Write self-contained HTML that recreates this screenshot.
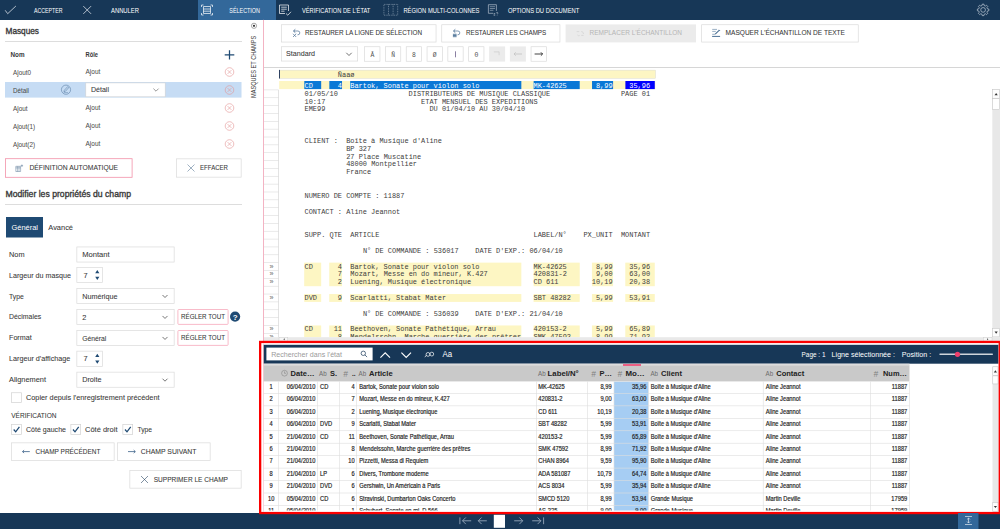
<!DOCTYPE html>
<html lang="fr"><head><meta charset="utf-8"><title>Masques et champs</title>
<style>
html,body{margin:0;padding:0;}
body{width:1000px;height:529px;overflow:hidden;background:#fff;}
svg{display:block}
text{font-family:"Liberation Sans",sans-serif;white-space:pre;}
text.m{font-family:"Liberation Mono",monospace;}
</style></head><body>
<svg width="1000" height="529" viewBox="0 0 1000 529">
<rect x="0" y="0" width="1000" height="20" fill="#173757"/>
<rect x="198" y="0" width="78" height="20" fill="#33689a"/>
<svg x="5" y="4" width="12" height="12" viewBox="0 0 12 12" overflow="visible"><path d="M0.2 6.3 L2.7 9.7 L10.9 2" fill="none" stroke="#e4eaf0" stroke-width="0.75"/></svg>
<text x="34" y="12.61" font-size="6.6" fill="#fff" textLength="28.5" lengthAdjust="spacingAndGlyphs">ACCEPTER</text>
<svg x="83" y="5.8" width="8.4" height="8.4" viewBox="0 0 8.4 8.4" overflow="visible"><path d="M0.3 0.3 L8.1 8.1 M8.1 0.3 L0.3 8.1" fill="none" stroke="#e4eaf0" stroke-width="0.75"/></svg>
<text x="111" y="12.61" font-size="6.6" fill="#fff" textLength="28" lengthAdjust="spacingAndGlyphs">ANNULER</text>
<svg x="201" y="4" width="12" height="12" viewBox="0 0 12 12" overflow="visible"><g fill="none" stroke="#fff" stroke-width="0.7"><path d="M0.5 3 V1 H2.5 M9.5 1 H11.5 V3 M11.5 9 V11 H9.5 M2.5 11 H0.5 V9"/><path d="M2.5 2.5 H9.5 V9.5 H2.5 Z M2.5 5 H9.5 M2.5 7.2 H9.5"/></g></svg>
<text x="229.3" y="12.61" font-size="6.6" fill="#fff" textLength="30.7" lengthAdjust="spacingAndGlyphs">SÉLECTION</text>
<svg x="279" y="4" width="13" height="12" viewBox="0 0 13 12" overflow="visible"><g fill="none" stroke="#fff" stroke-width="0.7"><path d="M9.5 7 V1 H0.5 V9.5 H6"/><path d="M2.2 3.2 H7.8 M2.2 5.2 H7.8 M2.2 7.2 H5.5"/><path d="M7 9.5 L8.8 11.2 L12 7.8"/></g></svg>
<text x="302" y="12.61" font-size="6.6" fill="#fff" textLength="68.3" lengthAdjust="spacingAndGlyphs">VÉRIFICATION DE L&#x27;ÉTAT</text>
<svg x="383.5" y="4" width="14.6" height="11.6" viewBox="0 0 14.6 11.6" overflow="visible"><g fill="none" stroke="#a3b3c5" stroke-width="0.6" stroke-dasharray="0.9 0.8"><path d="M0.4 0.4 H14.2 V11.2 H0.4 Z"/><path d="M5 0.4 V11.2 M9.6 0.4 V11.2"/></g></svg>
<text x="403.4" y="12.61" font-size="6.6" fill="#fff" textLength="76" lengthAdjust="spacingAndGlyphs">RÉGION MULTI-COLONNES</text>
<svg x="488" y="4.3" width="11" height="11.4" viewBox="0 0 11 11.4" overflow="visible"><g fill="none" stroke="#c9d3de" stroke-width="0.6"><path d="M8.4 6.6 V0.4 H0.4 V9 H5"/><path d="M1.8 2.4 H7 M1.8 4.2 H7 M1.8 6 H5.4" stroke-width="0.5"/><path d="M5.6 9.4 H7.2 M5.6 10.8 H7.2" stroke-width="0.7"/><path d="M8.2 8.6 Q9.4 7.6 10 8.6 Q10.1 9.4 9.2 9.9 M9.2 10.8 V11.2" stroke-width="0.55"/></g></svg>
<text x="507.9" y="12.61" font-size="6.6" fill="#fff" textLength="71.4" lengthAdjust="spacingAndGlyphs">OPTIONS DU DOCUMENT</text>
<svg x="977.2" y="3.9" width="11.8" height="12" viewBox="0 0 12.4 12.6" overflow="visible"><g fill="none" stroke="#d5dde6" stroke-width="0.65" stroke-linejoin="round"><circle cx="6.2" cy="6.3" r="2.5"/><path d="M5.07 1.74 L5.29 0.27 L7.11 0.27 L7.33 1.74 L8.62 2.27 L9.82 1.39 L11.11 2.68 L10.23 3.88 L10.76 5.17 L12.23 5.39 L12.23 7.21 L10.76 7.43 L10.23 8.72 L11.11 9.92 L9.82 11.21 L8.62 10.33 L7.33 10.86 L7.11 12.33 L5.29 12.33 L5.07 10.86 L3.78 10.33 L2.58 11.21 L1.29 9.92 L2.17 8.72 L1.64 7.43 L0.17 7.21 L0.17 5.39 L1.64 5.17 L2.17 3.88 L1.29 2.68 L2.58 1.39 L3.78 2.27 Z"/></g></svg>
<text x="5.5" y="34.17" font-size="8.5" fill="#383838" textLength="33.5" lengthAdjust="spacingAndGlyphs" stroke="#383838" stroke-width="0.33">Masques</text>
<rect x="5" y="41" width="237" height="0.7" fill="#cfcfcf"/>
<text x="10.5" y="57.2" font-size="6.3" fill="#383838" font-weight="700">Nom</text>
<text x="85.5" y="57.2" font-size="6.3" fill="#383838" textLength="12.5" lengthAdjust="spacingAndGlyphs" font-weight="700">Rôle</text>
<svg x="224.7" y="50.2" width="9.6" height="9.4" viewBox="0 0 9.6 9.4" overflow="visible"><path d="M4.8 0 V9.4 M0 4.7 H9.6" stroke="#1f4a73" stroke-width="1.25" fill="none"/></svg>
<rect x="5" y="82" width="236.5" height="15.6" fill="#c6dcf4"/>
<rect x="85.8" y="82.9" width="79.4" height="13.9" stroke="#d2d2d2" stroke-width="0.6" fill="#fff"/>
<text x="13" y="74.7" font-size="6.3" fill="#4a4a4a" textLength="18" lengthAdjust="spacingAndGlyphs" stroke="#4a4a4a" stroke-width="0.03">Ajout0</text>
<text x="85.5" y="73.8" font-size="6.3" fill="#4a4a4a" textLength="14.8" lengthAdjust="spacingAndGlyphs" stroke="#4a4a4a" stroke-width="0.03">Ajout</text>
<svg x="224.7" y="67.2" width="9.6" height="9.6" viewBox="0 0 9.6 9.6" overflow="visible"><g fill="none" stroke="#e39393" stroke-width="0.6"><circle cx="4.8" cy="4.8" r="4.3"/><path d="M2.9 2.9 L6.7 6.7 M6.7 2.9 L2.9 6.7"/></g></svg>
<text x="13" y="92.7" font-size="6.3" fill="#4a4a4a" textLength="16" lengthAdjust="spacingAndGlyphs" stroke="#4a4a4a" stroke-width="0.03">Détail</text>
<text x="91" y="92.39" font-size="7.4" fill="#383838" textLength="18" lengthAdjust="spacingAndGlyphs" stroke="#383838" stroke-width="0.07">Détail</text>
<svg x="153" y="88" width="6" height="4" viewBox="0 0 6 4" overflow="visible"><path d="M0.4 0.6 L3 3.2 L5.6 0.6" fill="none" stroke="#555" stroke-width="0.6"/></svg>
<svg x="61" y="84.7" width="10" height="10" viewBox="0 0 10 10" overflow="visible"><g fill="none" stroke="#5b7fa6" stroke-width="0.6"><circle cx="5" cy="5" r="4.6"/><path d="M2.9 7 L3.3 5.6 L6.6 2 L7.7 3 L4.4 6.6 Z"/><path d="M2.8 7.9 H7" stroke-width="0.5"/></g></svg>
<svg x="224.7" y="85.2" width="9.6" height="9.6" viewBox="0 0 9.6 9.6" overflow="visible"><g fill="none" stroke="#e39393" stroke-width="0.6"><circle cx="4.8" cy="4.8" r="4.3"/><path d="M2.9 2.9 L6.7 6.7 M6.7 2.9 L2.9 6.7"/></g></svg>
<text x="13" y="110.7" font-size="6.3" fill="#4a4a4a" textLength="14.6" lengthAdjust="spacingAndGlyphs" stroke="#4a4a4a" stroke-width="0.03">Ajout</text>
<text x="85.5" y="109.8" font-size="6.3" fill="#4a4a4a" textLength="14.8" lengthAdjust="spacingAndGlyphs" stroke="#4a4a4a" stroke-width="0.03">Ajout</text>
<svg x="224.7" y="103.2" width="9.6" height="9.6" viewBox="0 0 9.6 9.6" overflow="visible"><g fill="none" stroke="#e39393" stroke-width="0.6"><circle cx="4.8" cy="4.8" r="4.3"/><path d="M2.9 2.9 L6.7 6.7 M6.7 2.9 L2.9 6.7"/></g></svg>
<text x="13" y="128.71" font-size="6.3" fill="#4a4a4a" stroke="#4a4a4a" stroke-width="0.03">Ajout(1)</text>
<text x="85.5" y="127.8" font-size="6.3" fill="#4a4a4a" textLength="14.8" lengthAdjust="spacingAndGlyphs" stroke="#4a4a4a" stroke-width="0.03">Ajout</text>
<svg x="224.7" y="121.2" width="9.6" height="9.6" viewBox="0 0 9.6 9.6" overflow="visible"><g fill="none" stroke="#e39393" stroke-width="0.6"><circle cx="4.8" cy="4.8" r="4.3"/><path d="M2.9 2.9 L6.7 6.7 M6.7 2.9 L2.9 6.7"/></g></svg>
<text x="13" y="146.71" font-size="6.3" fill="#4a4a4a" stroke="#4a4a4a" stroke-width="0.03">Ajout(2)</text>
<text x="85.5" y="145.81" font-size="6.3" fill="#4a4a4a" textLength="14.8" lengthAdjust="spacingAndGlyphs" stroke="#4a4a4a" stroke-width="0.03">Ajout</text>
<svg x="224.7" y="139.2" width="9.6" height="9.6" viewBox="0 0 9.6 9.6" overflow="visible"><g fill="none" stroke="#e39393" stroke-width="0.6"><circle cx="4.8" cy="4.8" r="4.3"/><path d="M2.9 2.9 L6.7 6.7 M6.7 2.9 L2.9 6.7"/></g></svg>
<rect x="5.4" y="158.7" width="126.7" height="18.6" stroke="#f291a8" stroke-width="0.8" fill="#fff"/>
<svg x="15" y="163.5" width="9" height="9" viewBox="0 0 9 9" overflow="visible"><g fill="none" stroke="#4f6f90" stroke-width="0.45"><path d="M0.8 2.8 H5.6 V8 H0.8 Z M0.8 4.4 H5.6 M2.4 2.8 V8 M4 2.8 V8"/><path d="M6.9 1 V3.4 M5.7 2.2 H8.1" stroke-width="0.5"/></g></svg>
<text x="29.5" y="170.19" font-size="7.4" fill="#383838" textLength="88.5" lengthAdjust="spacingAndGlyphs" stroke="#383838" stroke-width="0.07">DÉFINITION AUTOMATIQUE</text>
<rect x="176.35" y="158.85" width="64.8" height="18.3" stroke="#dadada" stroke-width="0.7" fill="#fff"/>
<svg x="187" y="164" width="8" height="8" viewBox="0 0 8 8" overflow="visible"><path d="M0.5 0.5 L7.5 7.5 M7.5 0.5 L0.5 7.5" fill="none" stroke="#4f6f90" stroke-width="0.55"/></svg>
<text x="200" y="170.19" font-size="7.4" fill="#383838" textLength="28" lengthAdjust="spacingAndGlyphs" stroke="#383838" stroke-width="0.07">EFFACER</text>
<text x="5.5" y="197.47" font-size="8.5" fill="#383838" textLength="125.5" lengthAdjust="spacingAndGlyphs" stroke="#383838" stroke-width="0.33">Modifier les propriétés du champ</text>
<rect x="5" y="204.3" width="237" height="0.7" fill="#cfcfcf"/>
<rect x="6" y="217" width="37" height="20.5" fill="#1f4a73"/>
<text x="11.5" y="230.03" font-size="8.1" fill="#fff" textLength="26.5" lengthAdjust="spacingAndGlyphs">Général</text>
<text x="48.3" y="230.03" font-size="8.1" fill="#383838" textLength="24.7" lengthAdjust="spacingAndGlyphs" stroke="#383838" stroke-width="0.07">Avancé</text>
<text x="9" y="257.09" font-size="7.4" fill="#383838" textLength="15.5" lengthAdjust="spacingAndGlyphs" stroke="#383838" stroke-width="0.07">Nom</text>
<rect x="76.85" y="246.95" width="97.3" height="15.1" stroke="#dadada" stroke-width="0.7" fill="#fff"/>
<text x="82.2" y="257.29" font-size="7.4" fill="#383838" textLength="27.4" lengthAdjust="spacingAndGlyphs" stroke="#383838" stroke-width="0.07">Montant</text>
<text x="9" y="277.79" font-size="7.4" fill="#383838" textLength="62" lengthAdjust="spacingAndGlyphs" stroke="#383838" stroke-width="0.07">Largeur du masque</text>
<rect x="76.85" y="267.35" width="25.6" height="15.3" stroke="#dadada" stroke-width="0.7" fill="#fff"/>
<text x="83.6" y="277.59" font-size="7.4" fill="#383838" stroke="#383838" stroke-width="0.07">7</text>
<svg x="95.1" y="269.8" width="4.4" height="10.4" viewBox="0 0 4.4 10.4" overflow="visible"><path d="M2.2 0.2 L4.3 3.4 H0.1 Z M2.2 10.2 L4.3 7 H0.1 Z" fill="#1f4a73"/></svg>
<text x="9" y="298.59" font-size="7.4" fill="#383838" textLength="14.7" lengthAdjust="spacingAndGlyphs" stroke="#383838" stroke-width="0.07">Type</text>
<rect x="76.85" y="288.55" width="97.3" height="14.9" stroke="#dadada" stroke-width="0.7" fill="#fff"/>
<text x="82.2" y="298.79" font-size="7.4" fill="#383838" textLength="35.3" lengthAdjust="spacingAndGlyphs" stroke="#383838" stroke-width="0.07">Numérique</text>
<svg x="162.2" y="294.6" width="5.6" height="3.6" viewBox="0 0 5.6 3.6" overflow="visible"><path d="M0.3 0.4 L2.8 2.9 L5.3 0.4" fill="none" stroke="#3c3c3c" stroke-width="0.7"/></svg>
<text x="9" y="319.19" font-size="7.4" fill="#383838" textLength="32.2" lengthAdjust="spacingAndGlyphs" stroke="#383838" stroke-width="0.07">Décimales</text>
<rect x="76.85" y="309.45" width="97.3" height="15" stroke="#dadada" stroke-width="0.7" fill="#fff"/>
<text x="82.2" y="319.74" font-size="7.4" fill="#383838" stroke="#383838" stroke-width="0.07">2</text>
<svg x="162.2" y="315.55" width="5.6" height="3.6" viewBox="0 0 5.6 3.6" overflow="visible"><path d="M0.3 0.4 L2.8 2.9 L5.3 0.4" fill="none" stroke="#3c3c3c" stroke-width="0.7"/></svg>
<text x="9" y="340.09" font-size="7.4" fill="#383838" textLength="22.7" lengthAdjust="spacingAndGlyphs" stroke="#383838" stroke-width="0.07">Format</text>
<rect x="76.85" y="330.45" width="97.3" height="15" stroke="#dadada" stroke-width="0.7" fill="#fff"/>
<text x="82.2" y="340.74" font-size="7.4" fill="#383838" textLength="24.2" lengthAdjust="spacingAndGlyphs" stroke="#383838" stroke-width="0.07">Général</text>
<svg x="162.2" y="336.55" width="5.6" height="3.6" viewBox="0 0 5.6 3.6" overflow="visible"><path d="M0.3 0.4 L2.8 2.9 L5.3 0.4" fill="none" stroke="#3c3c3c" stroke-width="0.7"/></svg>
<text x="9" y="360.79" font-size="7.4" fill="#383838" textLength="61.3" lengthAdjust="spacingAndGlyphs" stroke="#383838" stroke-width="0.07">Largeur d&#x27;affichage</text>
<rect x="76.85" y="351.15" width="25.6" height="15.3" stroke="#dadada" stroke-width="0.7" fill="#fff"/>
<text x="83.6" y="361.39" font-size="7.4" fill="#383838" stroke="#383838" stroke-width="0.07">7</text>
<svg x="95.1" y="353.6" width="4.4" height="10.4" viewBox="0 0 4.4 10.4" overflow="visible"><path d="M2.2 0.2 L4.3 3.4 H0.1 Z M2.2 10.2 L4.3 7 H0.1 Z" fill="#1f4a73"/></svg>
<text x="9" y="381.59" font-size="7.4" fill="#383838" stroke="#383838" stroke-width="0.07">Alignement</text>
<rect x="76.85" y="372.15" width="97.3" height="15.1" stroke="#dadada" stroke-width="0.7" fill="#fff"/>
<text x="82.2" y="382.49" font-size="7.4" fill="#383838" textLength="19.3" lengthAdjust="spacingAndGlyphs" stroke="#383838" stroke-width="0.07">Droite</text>
<svg x="162.2" y="378.3" width="5.6" height="3.6" viewBox="0 0 5.6 3.6" overflow="visible"><path d="M0.3 0.4 L2.8 2.9 L5.3 0.4" fill="none" stroke="#3c3c3c" stroke-width="0.7"/></svg>
<rect x="177.9" y="309.5" width="50.2" height="14.9" stroke="#f6aabb" stroke-width="0.8" fill="#fff" rx="0.9"/>
<text x="181" y="318.99" font-size="7.4" fill="#383838" textLength="44" lengthAdjust="spacingAndGlyphs" stroke="#383838" stroke-width="0.07">RÉGLER TOUT</text>
<rect x="177.9" y="330.5" width="50.2" height="14.9" stroke="#f6aabb" stroke-width="0.8" fill="#fff" rx="0.9"/>
<text x="181" y="339.99" font-size="7.4" fill="#383838" textLength="44" lengthAdjust="spacingAndGlyphs" stroke="#383838" stroke-width="0.07">RÉGLER TOUT</text>
<svg x="230" y="311.5" width="10.2" height="10.2" viewBox="0 0 10.2 10.2" overflow="visible"><circle cx="5.1" cy="5.1" r="5.1" fill="#1f4a73"/></svg>
<text x="235.15" y="319.7" font-size="8" fill="#fff" font-weight="700" text-anchor="middle">?</text>
<rect x="11.55" y="392.75" width="9.8" height="9.8" stroke="#d2d2d2" stroke-width="0.7" fill="#fff"/>
<text x="26" y="400.19" font-size="7.4" fill="#383838" textLength="133.5" lengthAdjust="spacingAndGlyphs" stroke="#383838" stroke-width="0.07">Copier depuis l&#x27;enregistrement précédent</text>
<text x="11.2" y="418.29" font-size="7.4" fill="#383838" textLength="45.3" lengthAdjust="spacingAndGlyphs" stroke="#383838" stroke-width="0.07">VÉRIFICATION</text>
<rect x="11.55" y="424.55" width="9.8" height="9.8" stroke="#d2d2d2" stroke-width="0.7" fill="#fff"/>
<svg x="13.2" y="425.9" width="7" height="7" viewBox="0 0 7 7" overflow="visible"><path d="M0.5 3.6 L2.5 5.9 L6.2 0.9" fill="none" stroke="#1f4a73" stroke-width="1.25"/></svg>
<text x="26" y="431.99" font-size="7.4" fill="#383838" textLength="40" lengthAdjust="spacingAndGlyphs" stroke="#383838" stroke-width="0.07">Côté gauche</text>
<rect x="70.85" y="424.55" width="9.8" height="9.8" stroke="#d2d2d2" stroke-width="0.7" fill="#fff"/>
<svg x="72.5" y="425.9" width="7" height="7" viewBox="0 0 7 7" overflow="visible"><path d="M0.5 3.6 L2.5 5.9 L6.2 0.9" fill="none" stroke="#1f4a73" stroke-width="1.25"/></svg>
<text x="85" y="431.99" font-size="7.4" fill="#383838" textLength="32.5" lengthAdjust="spacingAndGlyphs" stroke="#383838" stroke-width="0.07">Côté droit</text>
<rect x="122.85" y="424.55" width="9.8" height="9.8" stroke="#d2d2d2" stroke-width="0.7" fill="#fff"/>
<svg x="124.5" y="425.9" width="7" height="7" viewBox="0 0 7 7" overflow="visible"><path d="M0.5 3.6 L2.5 5.9 L6.2 0.9" fill="none" stroke="#1f4a73" stroke-width="1.25"/></svg>
<text x="137.5" y="431.99" font-size="7.4" fill="#383838" textLength="14.5" lengthAdjust="spacingAndGlyphs" stroke="#383838" stroke-width="0.07">Type</text>
<rect x="11.55" y="442.85" width="102.6" height="17.6" stroke="#dadada" stroke-width="0.7" fill="#fff"/>
<svg x="22" y="449.1" width="8" height="5" viewBox="0 0 8 5" overflow="visible"><path d="M7.8 2.5 H0.6 M2.1 1 L0.5 2.5 L2.1 4" fill="none" stroke="#2d5580" stroke-width="0.75"/></svg>
<text x="35.5" y="454.39" font-size="7.4" fill="#383838" textLength="65" lengthAdjust="spacingAndGlyphs" stroke="#383838" stroke-width="0.07">CHAMP PRÉCÉDENT</text>
<rect x="117.35" y="442.85" width="92.8" height="17.6" stroke="#dadada" stroke-width="0.7" fill="#fff"/>
<svg x="127.8" y="449.1" width="8" height="5" viewBox="0 0 8 5" overflow="visible"><path d="M0.2 2.5 H7.4 M5.9 1 L7.5 2.5 L5.9 4" fill="none" stroke="#2d5580" stroke-width="0.75"/></svg>
<text x="140.8" y="454.39" font-size="7.4" fill="#383838" textLength="55.7" lengthAdjust="spacingAndGlyphs" stroke="#383838" stroke-width="0.07">CHAMP SUIVANT</text>
<rect x="129.85" y="470.35" width="111.3" height="17.8" stroke="#dadada" stroke-width="0.7" fill="#fff"/>
<svg x="140.5" y="475.5" width="8" height="8" viewBox="0 0 8 8" overflow="visible"><path d="M0.5 0.5 L7.5 7.5 M7.5 0.5 L0.5 7.5" fill="none" stroke="#173757" stroke-width="0.55"/></svg>
<text x="153.7" y="481.99" font-size="7.4" fill="#383838" textLength="74.3" lengthAdjust="spacingAndGlyphs" stroke="#383838" stroke-width="0.07">SUPPRIMER LE CHAMP</text>
<svg x="251" y="22.8" width="6" height="6" viewBox="0 0 6 6" overflow="visible"><circle cx="3" cy="3" r="2.6" fill="none" stroke="#555" stroke-width="0.5"/><circle cx="3" cy="3" r="1.1" fill="#333"/></svg>
<text x="-98" y="256.2" font-size="6.6" fill="#3a3a3a" textLength="62.2" lengthAdjust="spacingAndGlyphs" transform="rotate(-90)">MASQUES ET CHAMPS</text>
<rect x="263" y="19.8" width="0.8" height="492.7" fill="#f0a0b4"/>
<rect x="281.35" y="24.75" width="154.7" height="17.3" stroke="#dadada" stroke-width="0.7" fill="#fff"/>
<text x="305" y="35.29" font-size="7.4" fill="#383838" textLength="117" lengthAdjust="spacingAndGlyphs" stroke="#383838" stroke-width="0.07">RESTAURER LA LIGNE DE SÉLECTION</text>
<svg x="292.6" y="28.9" width="8" height="8.5" viewBox="0 0 8 8.5" overflow="visible"><g fill="none" stroke="#4a6f94" stroke-width="0.7"><path d="M1 2.1 H5.3 A1.9 1.9 0 0 1 5.3 5.9 H4.9"/><path d="M2.7 0.4 L0.9 2.1 L2.7 3.8" stroke-width="0.9"/><path d="M0.4 4.9 L3.6 8.1 M3.6 4.9 L0.4 8.1"/></g></svg>
<rect x="441.75" y="24.75" width="118.2" height="17.3" stroke="#dadada" stroke-width="0.7" fill="#fff"/>
<text x="466" y="35.29" font-size="7.4" fill="#383838" textLength="80.2" lengthAdjust="spacingAndGlyphs" stroke="#383838" stroke-width="0.07">RESTAURER LES CHAMPS</text>
<svg x="452.6" y="28.9" width="8" height="8.5" viewBox="0 0 8 8.5" overflow="visible"><g fill="none" stroke="#4a6f94" stroke-width="0.7"><path d="M1 2.1 H5.3 A1.9 1.9 0 0 1 5.3 5.9 H4.9"/><path d="M2.7 0.4 L0.9 2.1 L2.7 3.8" stroke-width="0.9"/><path d="M0.3 5.4 H4 M0.3 6.6 H4 M0.3 7.8 H4" stroke-width="0.9"/></g></svg>
<rect x="565.6" y="24.4" width="130.4" height="18" fill="#ebebeb"/>
<text x="589.5" y="35.29" font-size="7.4" fill="#b5b5b5" textLength="92.5" lengthAdjust="spacingAndGlyphs">REMPLACER L&#x27;ÉCHANTILLON</text>
<svg x="576.2" y="30" width="8" height="6.4" viewBox="0 0 8 6.4" overflow="visible"><g fill="none" stroke="#d3d3d3" stroke-width="0.8"><path d="M0.5 1.6 H3 M5 1.6 A2 2 0 0 1 7.2 4 M1.2 5 A2 2 0 0 0 3.4 5.6 M5 5.4 H7.4"/></g></svg>
<rect x="701.65" y="24.75" width="156.6" height="17.3" stroke="#dadada" stroke-width="0.7" fill="#fff"/>
<text x="725.6" y="35.29" font-size="7.4" fill="#383838" textLength="119.4" lengthAdjust="spacingAndGlyphs" stroke="#383838" stroke-width="0.07">MASQUER L&#x27;ÉCHANTILLON DE TEXTE</text>
<svg x="712" y="29" width="8.2" height="8" viewBox="0 0 8.2 8" overflow="visible"><g fill="none" stroke="#4a6f94" stroke-width="0.55"><path d="M0.1 7.4 H8.1" stroke-width="1"/><path d="M0.2 0.4 H5 M0.2 2.4 H3.8 M0.2 5.3 H3.2"/><path d="M3.2 5.2 L7.4 1.2" stroke-width="1.1"/><path d="M7 0.9 L8 1.9" stroke-width="0.9"/></g></svg>
<rect x="281.35" y="46.75" width="76.3" height="14.3" stroke="#dadada" stroke-width="0.7" fill="#fff"/>
<text x="286" y="56.19" font-size="7.4" fill="#383838" textLength="29" lengthAdjust="spacingAndGlyphs" stroke="#383838" stroke-width="0.07">Standard</text>
<svg x="346" y="52.3" width="6" height="4" viewBox="0 0 6 4" overflow="visible"><path d="M0.3 0.5 L3 3.2 L5.7 0.5" fill="none" stroke="#333" stroke-width="0.7"/></svg>
<rect x="364.65" y="46.75" width="15.3" height="14.5" stroke="#dadada" stroke-width="0.7" fill="#fff"/>
<text x="372.3" y="56.54" font-size="6.4" fill="#505050" class="m" text-anchor="middle">Ā</text>
<rect x="385.45" y="46.75" width="15.3" height="14.5" stroke="#dadada" stroke-width="0.7" fill="#fff"/>
<text x="393.1" y="56.54" font-size="6.4" fill="#505050" class="m" text-anchor="middle">Ñ</text>
<rect x="406.25" y="46.75" width="15.3" height="14.5" stroke="#dadada" stroke-width="0.7" fill="#fff"/>
<text x="413.9" y="56.54" font-size="6.4" fill="#505050" class="m" text-anchor="middle">8</text>
<rect x="427.05" y="46.75" width="15.3" height="14.5" stroke="#dadada" stroke-width="0.7" fill="#fff"/>
<text x="434.7" y="56.54" font-size="6.4" fill="#505050" class="m" text-anchor="middle">Ø</text>
<rect x="447.85" y="46.75" width="15.3" height="14.5" stroke="#dadada" stroke-width="0.7" fill="#fff"/>
<rect x="455.2" y="51.3" width="0.7" height="6" fill="#5a4a7a"/>
<rect x="468.65" y="46.75" width="15.3" height="14.5" stroke="#dadada" stroke-width="0.7" fill="#fff"/>
<text x="476.3" y="56.54" font-size="6.4" fill="#505050" class="m" text-anchor="middle">Θ</text>
<rect x="489.1" y="46.4" width="16" height="15.2" fill="#ebebeb"/>
<svg x="493.7" y="51.4" width="6" height="4" viewBox="0 0 6 4" overflow="visible"><path d="M0.2 0.5 H5.4 V3.8" fill="none" stroke="#c6c6c6" stroke-width="0.6"/></svg>
<rect x="509.9" y="46.4" width="16" height="15.2" fill="#ebebeb"/>
<svg x="513.4" y="51" width="9" height="6" viewBox="0 0 9 6" overflow="visible"><path d="M8.6 3 H0.6 M2.3 1.3 L0.6 3 L2.3 4.7" fill="none" stroke="#c4c4c4" stroke-width="0.85"/></svg>
<rect x="531.05" y="46.75" width="15.3" height="14.5" stroke="#dadada" stroke-width="0.7" fill="#fff"/>
<svg x="534.2" y="51" width="9" height="6" viewBox="0 0 9 6" overflow="visible"><path d="M0.4 3 H8.4 M6.7 1.3 L8.4 3 L6.7 4.7" fill="none" stroke="#222" stroke-width="0.85"/></svg>
<rect x="264" y="67" width="736" height="0.9" fill="#d2d2d2"/>
<rect x="264" y="89.6" width="14.5" height="0.6" fill="#dcdcdc"/>
<rect x="264" y="97.45" width="14.5" height="0.6" fill="#dcdcdc"/>
<rect x="264" y="105.3" width="14.5" height="0.6" fill="#dcdcdc"/>
<rect x="264" y="113.16" width="14.5" height="0.6" fill="#dcdcdc"/>
<rect x="264" y="121.01" width="14.5" height="0.6" fill="#dcdcdc"/>
<rect x="264" y="128.86" width="14.5" height="0.6" fill="#dcdcdc"/>
<rect x="264" y="136.71" width="14.5" height="0.6" fill="#dcdcdc"/>
<rect x="264" y="144.56" width="14.5" height="0.6" fill="#dcdcdc"/>
<rect x="264" y="152.42" width="14.5" height="0.6" fill="#dcdcdc"/>
<rect x="264" y="160.27" width="14.5" height="0.6" fill="#dcdcdc"/>
<rect x="264" y="168.12" width="14.5" height="0.6" fill="#dcdcdc"/>
<rect x="264" y="175.97" width="14.5" height="0.6" fill="#dcdcdc"/>
<rect x="264" y="183.82" width="14.5" height="0.6" fill="#dcdcdc"/>
<rect x="264" y="191.68" width="14.5" height="0.6" fill="#dcdcdc"/>
<rect x="264" y="199.53" width="14.5" height="0.6" fill="#dcdcdc"/>
<rect x="264" y="207.38" width="14.5" height="0.6" fill="#dcdcdc"/>
<rect x="264" y="215.23" width="14.5" height="0.6" fill="#dcdcdc"/>
<rect x="264" y="223.08" width="14.5" height="0.6" fill="#dcdcdc"/>
<rect x="264" y="230.94" width="14.5" height="0.6" fill="#dcdcdc"/>
<rect x="264" y="238.79" width="14.5" height="0.6" fill="#dcdcdc"/>
<rect x="264" y="246.64" width="14.5" height="0.6" fill="#dcdcdc"/>
<rect x="264" y="254.49" width="14.5" height="0.6" fill="#dcdcdc"/>
<rect x="264" y="262.34" width="14.5" height="0.6" fill="#dcdcdc"/>
<rect x="264" y="270.2" width="14.5" height="0.6" fill="#dcdcdc"/>
<rect x="264" y="278.05" width="14.5" height="0.6" fill="#dcdcdc"/>
<rect x="264" y="285.9" width="14.5" height="0.6" fill="#dcdcdc"/>
<rect x="264" y="293.75" width="14.5" height="0.6" fill="#dcdcdc"/>
<rect x="264" y="301.6" width="14.5" height="0.6" fill="#dcdcdc"/>
<rect x="264" y="309.46" width="14.5" height="0.6" fill="#dcdcdc"/>
<rect x="264" y="317.31" width="14.5" height="0.6" fill="#dcdcdc"/>
<rect x="264" y="325.16" width="14.5" height="0.6" fill="#dcdcdc"/>
<rect x="264" y="333.01" width="14.5" height="0.6" fill="#dcdcdc"/>
<rect x="278.3" y="89.9" width="0.6" height="247.5" fill="#d0d0d0"/>
<rect x="279.25" y="70.15" width="376.2" height="8.1" stroke="#dcdccc" stroke-width="0.5" fill="#fdf6c3"/>
<rect x="279" y="69.9" width="0.9" height="8.6" fill="#1a2f55"/>
<rect x="279.2" y="81" width="376.1" height="8.1" fill="#fdf6c3"/>
<rect x="304.3" y="81" width="16.88" height="8.1" fill="#0a78d6"/>
<rect x="329.32" y="81" width="12.71" height="8.1" fill="#0a78d6"/>
<rect x="350.17" y="81" width="171.17" height="8.1" fill="#0a78d6"/>
<rect x="533.65" y="81" width="46.07" height="8.1" fill="#0a78d6"/>
<rect x="592.03" y="81" width="21.05" height="8.1" fill="#0a78d6"/>
<rect x="625.39" y="81" width="29.39" height="8.1" fill="#0000fe"/>
<text x="337.86" y="76.83" font-size="6.95" fill="#404040" class="m">Ñaaø</text>
<text x="304.5" y="87.53" font-size="6.95" fill="#fff" class="m">CD      4  Bartok, Sonate pour violon solo             MK-42625       8,99    35,96</text>
<svg x="264" y="89.9" width="728" height="247.3" viewBox="264 89.9 728 247.3">
<rect x="304.2" y="262.64" width="16.98" height="23.56" fill="#fdf6c3"/>
<rect x="329.22" y="262.64" width="12.81" height="23.56" fill="#fdf6c3"/>
<rect x="350.07" y="262.64" width="171.27" height="23.56" fill="#fdf6c3"/>
<rect x="533.55" y="262.64" width="46.17" height="23.56" fill="#fdf6c3"/>
<rect x="591.93" y="262.64" width="21.15" height="23.56" fill="#fdf6c3"/>
<rect x="625.29" y="262.64" width="29.49" height="23.56" fill="#fdf6c3"/>
<rect x="304.2" y="294.05" width="16.98" height="7.85" fill="#fdf6c3"/>
<rect x="329.22" y="294.05" width="12.81" height="7.85" fill="#fdf6c3"/>
<rect x="350.07" y="294.05" width="171.27" height="7.85" fill="#fdf6c3"/>
<rect x="533.55" y="294.05" width="46.17" height="7.85" fill="#fdf6c3"/>
<rect x="591.93" y="294.05" width="21.15" height="7.85" fill="#fdf6c3"/>
<rect x="625.29" y="294.05" width="29.49" height="7.85" fill="#fdf6c3"/>
<rect x="304.2" y="325.46" width="16.98" height="15.7" fill="#fdf6c3"/>
<rect x="329.22" y="325.46" width="12.81" height="15.7" fill="#fdf6c3"/>
<rect x="350.07" y="325.46" width="171.27" height="15.7" fill="#fdf6c3"/>
<rect x="533.55" y="325.46" width="46.17" height="15.7" fill="#fdf6c3"/>
<rect x="591.93" y="325.46" width="21.15" height="15.7" fill="#fdf6c3"/>
<rect x="625.29" y="325.46" width="29.49" height="15.7" fill="#fdf6c3"/>
<text x="304.5" y="95.76" font-size="6.95" fill="#404040" class="m">01/05/10                 DISTRIBUTEURS DE MUSIQUE CLASSIQUE                 PAGE 01</text>
<text x="304.5" y="103.61" font-size="6.95" fill="#404040" class="m">10:17                       ETAT MENSUEL DES EXPEDITIONS</text>
<text x="304.5" y="111.46" font-size="6.95" fill="#404040" class="m">EME99                         DU 01/04/10 AU 30/04/10</text>
<text x="304.5" y="142.87" font-size="6.95" fill="#404040" class="m">CLIENT :  Boîte à Musique d&#x27;Aline</text>
<text x="346.2" y="150.72" font-size="6.95" fill="#404040" class="m">BP 327</text>
<text x="346.2" y="158.57" font-size="6.95" fill="#404040" class="m">27 Place Muscatine</text>
<text x="346.2" y="166.43" font-size="6.95" fill="#404040" class="m">48000 Montpellier</text>
<text x="346.2" y="174.28" font-size="6.95" fill="#404040" class="m">France</text>
<text x="304.5" y="197.83" font-size="6.95" fill="#404040" class="m">NUMERO DE COMPTE : 11887</text>
<text x="304.5" y="213.54" font-size="6.95" fill="#404040" class="m">CONTACT : Aline Jeannot</text>
<text x="304.5" y="237.09" font-size="6.95" fill="#404040" class="m">SUPP. QTE  ARTICLE                                     LABEL/N°    PX_UNIT  MONTANT</text>
<text x="362.88" y="252.8" font-size="6.95" fill="#404040" class="m">N° DE COMMANDE : 536017    DATE D&#x27;EXP.: 06/04/10</text>
<text x="304.5" y="268.5" font-size="6.95" fill="#404040" class="m">CD      4  Bartok, Sonate pour violon solo             MK-42625       8,99    35,96</text>
<text x="337.86" y="276.35" font-size="6.95" fill="#404040" class="m">7  Mozart, Messe en do mineur, K.427           420831-2       9,00    63,00</text>
<text x="337.86" y="284.21" font-size="6.95" fill="#404040" class="m">2  Luening, Musique électronique               CD 611        10,19    20,38</text>
<text x="304.5" y="299.91" font-size="6.95" fill="#404040" class="m">DVD     9  Scarlatti, Stabat Mater                     SBT 48282      5,99    53,91</text>
<text x="362.88" y="315.61" font-size="6.95" fill="#404040" class="m">N° DE COMMANDE : 536039    DATE D&#x27;EXP.: 21/04/10</text>
<text x="304.5" y="331.32" font-size="6.95" fill="#404040" class="m">CD     11  Beethoven, Sonate Pathétique, Arrau         420153-2       5,99    65,89</text>
<text x="337.86" y="339.17" font-size="6.95" fill="#404040" class="m">8  Mendelssohn, Marche guerrière des prêtres   SMK 47592      8,99    71,92</text>
<text x="269.6" y="268.57" font-size="7.5" fill="#666" textLength="4" lengthAdjust="spacingAndGlyphs">»</text>
<text x="269.6" y="276.42" font-size="7.5" fill="#666" textLength="4" lengthAdjust="spacingAndGlyphs">»</text>
<text x="269.6" y="284.27" font-size="7.5" fill="#666" textLength="4" lengthAdjust="spacingAndGlyphs">»</text>
<text x="269.6" y="299.98" font-size="7.5" fill="#666" textLength="4" lengthAdjust="spacingAndGlyphs">»</text>
<text x="269.6" y="331.39" font-size="7.5" fill="#666" textLength="4" lengthAdjust="spacingAndGlyphs">»</text>
<text x="269.6" y="339.24" font-size="7.5" fill="#666" textLength="4" lengthAdjust="spacingAndGlyphs">»</text>
</svg>
<rect x="992.3" y="89.3" width="7.7" height="247.9" fill="#e8e8e8"/>
<rect x="992.57" y="89.58" width="7.15" height="8.65" stroke="#c4c4c4" stroke-width="0.55" fill="#fdfdfd"/>
<rect x="992.57" y="328.27" width="7.15" height="8.65" stroke="#c4c4c4" stroke-width="0.55" fill="#fdfdfd"/>
<svg x="994.35" y="92.9" width="3.6" height="2.6" viewBox="0 0 3.6 2.6" overflow="visible"><path d="M1.8 0.2 L3.4 2.4 H0.2 Z" fill="#333"/></svg>
<svg x="994.35" y="331.4" width="3.6" height="2.6" viewBox="0 0 3.6 2.6" overflow="visible"><path d="M1.8 2.4 L3.4 0.2 H0.2 Z" fill="#333"/></svg>
<rect x="992.57" y="98.68" width="7.15" height="10.85" stroke="#c4c4c4" stroke-width="0.55" fill="#fff"/>
<rect x="264" y="337.2" width="736" height="4" fill="#e9e9e9"/>
<rect x="279.05" y="337.45" width="8.7" height="3.5" stroke="#cfcfcf" stroke-width="0.5" fill="#f6f6f6"/>
<rect x="983.25" y="337.45" width="8.8" height="3.5" stroke="#cfcfcf" stroke-width="0.5" fill="#f6f6f6"/>
<svg x="283" y="338" width="2" height="2.4" viewBox="0 0 2 2.4" overflow="visible"><path d="M1.6 0.2 L0.4 1.2 L1.6 2.2 Z" fill="#333"/></svg>
<svg x="986.8" y="338" width="2" height="2.4" viewBox="0 0 2 2.4" overflow="visible"><path d="M0.4 0.2 L1.6 1.2 L0.4 2.2 Z" fill="#333"/></svg>
<rect x="259" y="341" width="741" height="172" fill="#fff"/>
<rect x="263.4" y="344.8" width="735" height="18.9" fill="#173757"/>
<rect x="266.4" y="347.6" width="106.2" height="12.8" fill="#fff"/>
<text x="271.2" y="356.79" font-size="7.4" fill="#9a9a9a" textLength="70.8" lengthAdjust="spacingAndGlyphs">Rechercher dans l&#x27;état</text>
<svg x="360.5" y="350.5" width="7" height="7" viewBox="0 0 7 7" overflow="visible"><g fill="none" stroke="#173757" stroke-width="0.7"><circle cx="2.8" cy="2.8" r="2.2"/><path d="M4.4 4.4 L6.6 6.6"/></g></svg>
<svg x="380" y="352" width="10.5" height="6" viewBox="0 0 10.5 6" overflow="visible"><path d="M0.4 5.6 L5.2 0.8 L10 5.6" fill="none" stroke="#fff" stroke-width="1.15"/></svg>
<svg x="401" y="352.2" width="10.5" height="6" viewBox="0 0 10.5 6" overflow="visible"><path d="M0.4 0.4 L5.2 5.2 L10 0.4" fill="none" stroke="#fff" stroke-width="1.15"/></svg>
<svg x="424.6" y="351" width="9.4" height="6.4" viewBox="0 0 9.4 6.4" overflow="visible"><g fill="none" stroke="#fff" stroke-width="0.7"><circle cx="3.4" cy="3.4" r="1.9"/><circle cx="7.2" cy="3.1" r="1.9"/><path d="M1.7 4.2 L0.3 6.2"/></g></svg>
<text x="442.6" y="357.28" font-size="8.5" fill="#fff" textLength="9.6" lengthAdjust="spacingAndGlyphs">Aa</text>
<text x="801.6" y="356.68" font-size="6.8" fill="#fff" textLength="23.9" lengthAdjust="spacingAndGlyphs">Page : 1</text>
<text x="831.6" y="356.68" font-size="6.8" fill="#fff" textLength="63.4" lengthAdjust="spacingAndGlyphs">Ligne sélectionnée :</text>
<text x="901.8" y="356.68" font-size="6.8" fill="#fff" textLength="29.4" lengthAdjust="spacingAndGlyphs">Position :</text>
<rect x="939.3" y="353.5" width="53.7" height="1.5" fill="#cfd4da" rx="0.7"/>
<svg x="954.9" y="351.7" width="5.2" height="5.2" viewBox="0 0 5.2 5.2" overflow="visible"><circle cx="2.6" cy="2.6" r="2.6" fill="#ee3f6c"/></svg>
<svg x="263.4" y="381.4" width="728.6" height="129" viewBox="263.4 381.4 728.6 129">
<rect x="614" y="381.4" width="34.4" height="140" fill="#a6cdf3"/>
<rect x="263.4" y="393.1" width="646.1" height="0.6" fill="#dedede"/>
<rect x="263.4" y="405.55" width="646.1" height="0.6" fill="#dedede"/>
<rect x="263.4" y="418" width="646.1" height="0.6" fill="#dedede"/>
<rect x="263.4" y="430.45" width="646.1" height="0.6" fill="#dedede"/>
<rect x="263.4" y="442.9" width="646.1" height="0.6" fill="#dedede"/>
<rect x="263.4" y="455.35" width="646.1" height="0.6" fill="#dedede"/>
<rect x="263.4" y="467.8" width="646.1" height="0.6" fill="#dedede"/>
<rect x="263.4" y="480.25" width="646.1" height="0.6" fill="#dedede"/>
<rect x="263.4" y="492.7" width="646.1" height="0.6" fill="#dedede"/>
<rect x="263.4" y="505.15" width="646.1" height="0.6" fill="#dedede"/>
<rect x="263.4" y="517.6" width="646.1" height="0.6" fill="#dedede"/>
<rect x="278.3" y="381.4" width="0.6" height="140" fill="#dedede"/>
<rect x="317.3" y="381.4" width="0.6" height="140" fill="#dedede"/>
<rect x="339.3" y="381.4" width="0.6" height="140" fill="#dedede"/>
<rect x="356.3" y="381.4" width="0.6" height="140" fill="#dedede"/>
<rect x="536.1" y="381.4" width="0.6" height="140" fill="#dedede"/>
<rect x="587.3" y="381.4" width="0.6" height="140" fill="#dedede"/>
<rect x="613.7" y="381.4" width="0.6" height="140" fill="#dedede"/>
<rect x="648.1" y="381.4" width="0.6" height="140" fill="#dedede"/>
<rect x="762.9" y="381.4" width="0.6" height="140" fill="#dedede"/>
<rect x="870.1" y="381.4" width="0.6" height="140" fill="#dedede"/>
<rect x="909.2" y="381.4" width="0.6" height="140" fill="#dedede"/>
<text x="269.61" y="388.78" font-size="6.3" fill="#1c1c1c" textLength="3.19" lengthAdjust="spacingAndGlyphs" stroke="#1c1c1c" stroke-width="0.17">1</text>
<text x="286.72" y="388.78" font-size="6.3" fill="#1c1c1c" textLength="28.68" lengthAdjust="spacingAndGlyphs" stroke="#1c1c1c" stroke-width="0.17">06/04/2010</text>
<text x="320" y="388.78" font-size="6.3" fill="#1c1c1c" textLength="8.28" lengthAdjust="spacingAndGlyphs" stroke="#1c1c1c" stroke-width="0.17">CD</text>
<text x="351.41" y="388.78" font-size="6.3" fill="#1c1c1c" textLength="3.19" lengthAdjust="spacingAndGlyphs" stroke="#1c1c1c" stroke-width="0.17">4</text>
<text x="359.3" y="388.78" font-size="6.3" fill="#1c1c1c" textLength="79.63" lengthAdjust="spacingAndGlyphs" stroke="#1c1c1c" stroke-width="0.17">Bartok, Sonate pour violon solo</text>
<text x="538.3" y="388.78" font-size="6.3" fill="#1c1c1c" textLength="26.44" lengthAdjust="spacingAndGlyphs" stroke="#1c1c1c" stroke-width="0.17">MK-42625</text>
<text x="600.45" y="388.78" font-size="6.3" fill="#1c1c1c" textLength="11.15" lengthAdjust="spacingAndGlyphs" stroke="#1c1c1c" stroke-width="0.17">8,99</text>
<text x="632.06" y="388.78" font-size="6.3" fill="#1c1c1c" textLength="14.34" lengthAdjust="spacingAndGlyphs" stroke="#1c1c1c" stroke-width="0.17">35,96</text>
<text x="650.7" y="388.78" font-size="6.3" fill="#1c1c1c" textLength="60.02" lengthAdjust="spacingAndGlyphs" stroke="#1c1c1c" stroke-width="0.17">Boîte à Musique d&#x27;Aline</text>
<text x="765.8" y="388.78" font-size="6.3" fill="#1c1c1c" textLength="34.72" lengthAdjust="spacingAndGlyphs" stroke="#1c1c1c" stroke-width="0.17">Aline Jeannot</text>
<text x="891.79" y="388.78" font-size="6.3" fill="#1c1c1c" textLength="15.51" lengthAdjust="spacingAndGlyphs" stroke="#1c1c1c" stroke-width="0.17">11887</text>
<text x="269.61" y="401.23" font-size="6.3" fill="#1c1c1c" textLength="3.19" lengthAdjust="spacingAndGlyphs" stroke="#1c1c1c" stroke-width="0.17">2</text>
<text x="286.72" y="401.23" font-size="6.3" fill="#1c1c1c" textLength="28.68" lengthAdjust="spacingAndGlyphs" stroke="#1c1c1c" stroke-width="0.17">06/04/2010</text>
<text x="351.41" y="401.23" font-size="6.3" fill="#1c1c1c" textLength="3.19" lengthAdjust="spacingAndGlyphs" stroke="#1c1c1c" stroke-width="0.17">7</text>
<text x="359.3" y="401.23" font-size="6.3" fill="#1c1c1c" textLength="90.45" lengthAdjust="spacingAndGlyphs" stroke="#1c1c1c" stroke-width="0.17">Mozart, Messe en do mineur, K.427</text>
<text x="538.3" y="401.23" font-size="6.3" fill="#1c1c1c" textLength="24.22" lengthAdjust="spacingAndGlyphs" stroke="#1c1c1c" stroke-width="0.17">420831-2</text>
<text x="600.45" y="401.23" font-size="6.3" fill="#1c1c1c" textLength="11.15" lengthAdjust="spacingAndGlyphs" stroke="#1c1c1c" stroke-width="0.17">9,00</text>
<text x="632.06" y="401.23" font-size="6.3" fill="#1c1c1c" textLength="14.34" lengthAdjust="spacingAndGlyphs" stroke="#1c1c1c" stroke-width="0.17">63,00</text>
<text x="650.7" y="401.23" font-size="6.3" fill="#1c1c1c" textLength="60.02" lengthAdjust="spacingAndGlyphs" stroke="#1c1c1c" stroke-width="0.17">Boîte à Musique d&#x27;Aline</text>
<text x="765.8" y="401.23" font-size="6.3" fill="#1c1c1c" textLength="34.72" lengthAdjust="spacingAndGlyphs" stroke="#1c1c1c" stroke-width="0.17">Aline Jeannot</text>
<text x="891.79" y="401.23" font-size="6.3" fill="#1c1c1c" textLength="15.51" lengthAdjust="spacingAndGlyphs" stroke="#1c1c1c" stroke-width="0.17">11887</text>
<text x="269.61" y="413.68" font-size="6.3" fill="#1c1c1c" textLength="3.19" lengthAdjust="spacingAndGlyphs" stroke="#1c1c1c" stroke-width="0.17">3</text>
<text x="286.72" y="413.68" font-size="6.3" fill="#1c1c1c" textLength="28.68" lengthAdjust="spacingAndGlyphs" stroke="#1c1c1c" stroke-width="0.17">06/04/2010</text>
<text x="351.41" y="413.68" font-size="6.3" fill="#1c1c1c" textLength="3.19" lengthAdjust="spacingAndGlyphs" stroke="#1c1c1c" stroke-width="0.17">2</text>
<text x="359.3" y="413.68" font-size="6.3" fill="#1c1c1c" textLength="78.05" lengthAdjust="spacingAndGlyphs" stroke="#1c1c1c" stroke-width="0.17">Luening, Musique électronique</text>
<text x="538.3" y="413.68" font-size="6.3" fill="#1c1c1c" textLength="19" lengthAdjust="spacingAndGlyphs" stroke="#1c1c1c" stroke-width="0.17">CD 611</text>
<text x="597.26" y="413.68" font-size="6.3" fill="#1c1c1c" textLength="14.34" lengthAdjust="spacingAndGlyphs" stroke="#1c1c1c" stroke-width="0.17">10,19</text>
<text x="632.06" y="413.68" font-size="6.3" fill="#1c1c1c" textLength="14.34" lengthAdjust="spacingAndGlyphs" stroke="#1c1c1c" stroke-width="0.17">20,38</text>
<text x="650.7" y="413.68" font-size="6.3" fill="#1c1c1c" textLength="60.02" lengthAdjust="spacingAndGlyphs" stroke="#1c1c1c" stroke-width="0.17">Boîte à Musique d&#x27;Aline</text>
<text x="765.8" y="413.68" font-size="6.3" fill="#1c1c1c" textLength="34.72" lengthAdjust="spacingAndGlyphs" stroke="#1c1c1c" stroke-width="0.17">Aline Jeannot</text>
<text x="891.79" y="413.68" font-size="6.3" fill="#1c1c1c" textLength="15.51" lengthAdjust="spacingAndGlyphs" stroke="#1c1c1c" stroke-width="0.17">11887</text>
<text x="269.61" y="426.13" font-size="6.3" fill="#1c1c1c" textLength="3.19" lengthAdjust="spacingAndGlyphs" stroke="#1c1c1c" stroke-width="0.17">4</text>
<text x="286.72" y="426.13" font-size="6.3" fill="#1c1c1c" textLength="28.68" lengthAdjust="spacingAndGlyphs" stroke="#1c1c1c" stroke-width="0.17">06/04/2010</text>
<text x="320" y="426.13" font-size="6.3" fill="#1c1c1c" textLength="12.1" lengthAdjust="spacingAndGlyphs" stroke="#1c1c1c" stroke-width="0.17">DVD</text>
<text x="351.41" y="426.13" font-size="6.3" fill="#1c1c1c" textLength="3.19" lengthAdjust="spacingAndGlyphs" stroke="#1c1c1c" stroke-width="0.17">9</text>
<text x="359.3" y="426.13" font-size="6.3" fill="#1c1c1c" textLength="56.69" lengthAdjust="spacingAndGlyphs" stroke="#1c1c1c" stroke-width="0.17">Scarlatti, Stabat Mater</text>
<text x="538.3" y="426.13" font-size="6.3" fill="#1c1c1c" textLength="28.57" lengthAdjust="spacingAndGlyphs" stroke="#1c1c1c" stroke-width="0.17">SBT 48282</text>
<text x="600.45" y="426.13" font-size="6.3" fill="#1c1c1c" textLength="11.15" lengthAdjust="spacingAndGlyphs" stroke="#1c1c1c" stroke-width="0.17">5,99</text>
<text x="632.06" y="426.13" font-size="6.3" fill="#1c1c1c" textLength="14.34" lengthAdjust="spacingAndGlyphs" stroke="#1c1c1c" stroke-width="0.17">53,91</text>
<text x="650.7" y="426.13" font-size="6.3" fill="#1c1c1c" textLength="60.02" lengthAdjust="spacingAndGlyphs" stroke="#1c1c1c" stroke-width="0.17">Boîte à Musique d&#x27;Aline</text>
<text x="765.8" y="426.13" font-size="6.3" fill="#1c1c1c" textLength="34.72" lengthAdjust="spacingAndGlyphs" stroke="#1c1c1c" stroke-width="0.17">Aline Jeannot</text>
<text x="891.79" y="426.13" font-size="6.3" fill="#1c1c1c" textLength="15.51" lengthAdjust="spacingAndGlyphs" stroke="#1c1c1c" stroke-width="0.17">11887</text>
<text x="269.61" y="438.58" font-size="6.3" fill="#1c1c1c" textLength="3.19" lengthAdjust="spacingAndGlyphs" stroke="#1c1c1c" stroke-width="0.17">5</text>
<text x="286.72" y="438.58" font-size="6.3" fill="#1c1c1c" textLength="28.68" lengthAdjust="spacingAndGlyphs" stroke="#1c1c1c" stroke-width="0.17">21/04/2010</text>
<text x="320" y="438.58" font-size="6.3" fill="#1c1c1c" textLength="8.28" lengthAdjust="spacingAndGlyphs" stroke="#1c1c1c" stroke-width="0.17">CD</text>
<text x="348.65" y="438.58" font-size="6.3" fill="#1c1c1c" textLength="5.95" lengthAdjust="spacingAndGlyphs" stroke="#1c1c1c" stroke-width="0.17">11</text>
<text x="359.3" y="438.58" font-size="6.3" fill="#1c1c1c" textLength="94.62" lengthAdjust="spacingAndGlyphs" stroke="#1c1c1c" stroke-width="0.17">Beethoven, Sonate Pathétique, Arrau</text>
<text x="538.3" y="438.58" font-size="6.3" fill="#1c1c1c" textLength="24.22" lengthAdjust="spacingAndGlyphs" stroke="#1c1c1c" stroke-width="0.17">420153-2</text>
<text x="600.45" y="438.58" font-size="6.3" fill="#1c1c1c" textLength="11.15" lengthAdjust="spacingAndGlyphs" stroke="#1c1c1c" stroke-width="0.17">5,99</text>
<text x="632.06" y="438.58" font-size="6.3" fill="#1c1c1c" textLength="14.34" lengthAdjust="spacingAndGlyphs" stroke="#1c1c1c" stroke-width="0.17">65,89</text>
<text x="650.7" y="438.58" font-size="6.3" fill="#1c1c1c" textLength="60.02" lengthAdjust="spacingAndGlyphs" stroke="#1c1c1c" stroke-width="0.17">Boîte à Musique d&#x27;Aline</text>
<text x="765.8" y="438.58" font-size="6.3" fill="#1c1c1c" textLength="34.72" lengthAdjust="spacingAndGlyphs" stroke="#1c1c1c" stroke-width="0.17">Aline Jeannot</text>
<text x="891.79" y="438.58" font-size="6.3" fill="#1c1c1c" textLength="15.51" lengthAdjust="spacingAndGlyphs" stroke="#1c1c1c" stroke-width="0.17">11887</text>
<text x="269.61" y="451.03" font-size="6.3" fill="#1c1c1c" textLength="3.19" lengthAdjust="spacingAndGlyphs" stroke="#1c1c1c" stroke-width="0.17">6</text>
<text x="286.72" y="451.03" font-size="6.3" fill="#1c1c1c" textLength="28.68" lengthAdjust="spacingAndGlyphs" stroke="#1c1c1c" stroke-width="0.17">21/04/2010</text>
<text x="351.41" y="451.03" font-size="6.3" fill="#1c1c1c" textLength="3.19" lengthAdjust="spacingAndGlyphs" stroke="#1c1c1c" stroke-width="0.17">8</text>
<text x="359.3" y="451.03" font-size="6.3" fill="#1c1c1c" textLength="111.15" lengthAdjust="spacingAndGlyphs" stroke="#1c1c1c" stroke-width="0.17">Mendelssohn, Marche guerrière des prêtres</text>
<text x="538.3" y="451.03" font-size="6.3" fill="#1c1c1c" textLength="29.94" lengthAdjust="spacingAndGlyphs" stroke="#1c1c1c" stroke-width="0.17">SMK 47592</text>
<text x="600.45" y="451.03" font-size="6.3" fill="#1c1c1c" textLength="11.15" lengthAdjust="spacingAndGlyphs" stroke="#1c1c1c" stroke-width="0.17">8,99</text>
<text x="632.06" y="451.03" font-size="6.3" fill="#1c1c1c" textLength="14.34" lengthAdjust="spacingAndGlyphs" stroke="#1c1c1c" stroke-width="0.17">71,92</text>
<text x="650.7" y="451.03" font-size="6.3" fill="#1c1c1c" textLength="60.02" lengthAdjust="spacingAndGlyphs" stroke="#1c1c1c" stroke-width="0.17">Boîte à Musique d&#x27;Aline</text>
<text x="765.8" y="451.03" font-size="6.3" fill="#1c1c1c" textLength="34.72" lengthAdjust="spacingAndGlyphs" stroke="#1c1c1c" stroke-width="0.17">Aline Jeannot</text>
<text x="891.79" y="451.03" font-size="6.3" fill="#1c1c1c" textLength="15.51" lengthAdjust="spacingAndGlyphs" stroke="#1c1c1c" stroke-width="0.17">11887</text>
<text x="269.61" y="463.48" font-size="6.3" fill="#1c1c1c" textLength="3.19" lengthAdjust="spacingAndGlyphs" stroke="#1c1c1c" stroke-width="0.17">7</text>
<text x="286.72" y="463.48" font-size="6.3" fill="#1c1c1c" textLength="28.68" lengthAdjust="spacingAndGlyphs" stroke="#1c1c1c" stroke-width="0.17">21/04/2010</text>
<text x="348.23" y="463.48" font-size="6.3" fill="#1c1c1c" textLength="6.37" lengthAdjust="spacingAndGlyphs" stroke="#1c1c1c" stroke-width="0.17">10</text>
<text x="359.3" y="463.48" font-size="6.3" fill="#1c1c1c" textLength="69.1" lengthAdjust="spacingAndGlyphs" stroke="#1c1c1c" stroke-width="0.17">Pizzetti, Messa di Requiem</text>
<text x="538.3" y="463.48" font-size="6.3" fill="#1c1c1c" textLength="30.58" lengthAdjust="spacingAndGlyphs" stroke="#1c1c1c" stroke-width="0.17">CHAN 8964</text>
<text x="600.45" y="463.48" font-size="6.3" fill="#1c1c1c" textLength="11.15" lengthAdjust="spacingAndGlyphs" stroke="#1c1c1c" stroke-width="0.17">9,59</text>
<text x="632.06" y="463.48" font-size="6.3" fill="#1c1c1c" textLength="14.34" lengthAdjust="spacingAndGlyphs" stroke="#1c1c1c" stroke-width="0.17">95,90</text>
<text x="650.7" y="463.48" font-size="6.3" fill="#1c1c1c" textLength="60.02" lengthAdjust="spacingAndGlyphs" stroke="#1c1c1c" stroke-width="0.17">Boîte à Musique d&#x27;Aline</text>
<text x="765.8" y="463.48" font-size="6.3" fill="#1c1c1c" textLength="34.72" lengthAdjust="spacingAndGlyphs" stroke="#1c1c1c" stroke-width="0.17">Aline Jeannot</text>
<text x="891.79" y="463.48" font-size="6.3" fill="#1c1c1c" textLength="15.51" lengthAdjust="spacingAndGlyphs" stroke="#1c1c1c" stroke-width="0.17">11887</text>
<text x="269.61" y="475.93" font-size="6.3" fill="#1c1c1c" textLength="3.19" lengthAdjust="spacingAndGlyphs" stroke="#1c1c1c" stroke-width="0.17">8</text>
<text x="286.72" y="475.93" font-size="6.3" fill="#1c1c1c" textLength="28.68" lengthAdjust="spacingAndGlyphs" stroke="#1c1c1c" stroke-width="0.17">21/04/2010</text>
<text x="320" y="475.93" font-size="6.3" fill="#1c1c1c" textLength="7.01" lengthAdjust="spacingAndGlyphs" stroke="#1c1c1c" stroke-width="0.17">LP</text>
<text x="351.41" y="475.93" font-size="6.3" fill="#1c1c1c" textLength="3.19" lengthAdjust="spacingAndGlyphs" stroke="#1c1c1c" stroke-width="0.17">6</text>
<text x="359.3" y="475.93" font-size="6.3" fill="#1c1c1c" textLength="69.43" lengthAdjust="spacingAndGlyphs" stroke="#1c1c1c" stroke-width="0.17">Divers, Trombone moderne</text>
<text x="538.3" y="475.93" font-size="6.3" fill="#1c1c1c" textLength="32.18" lengthAdjust="spacingAndGlyphs" stroke="#1c1c1c" stroke-width="0.17">ADA 581087</text>
<text x="597.26" y="475.93" font-size="6.3" fill="#1c1c1c" textLength="14.34" lengthAdjust="spacingAndGlyphs" stroke="#1c1c1c" stroke-width="0.17">10,79</text>
<text x="632.06" y="475.93" font-size="6.3" fill="#1c1c1c" textLength="14.34" lengthAdjust="spacingAndGlyphs" stroke="#1c1c1c" stroke-width="0.17">64,74</text>
<text x="650.7" y="475.93" font-size="6.3" fill="#1c1c1c" textLength="60.02" lengthAdjust="spacingAndGlyphs" stroke="#1c1c1c" stroke-width="0.17">Boîte à Musique d&#x27;Aline</text>
<text x="765.8" y="475.93" font-size="6.3" fill="#1c1c1c" textLength="34.72" lengthAdjust="spacingAndGlyphs" stroke="#1c1c1c" stroke-width="0.17">Aline Jeannot</text>
<text x="891.79" y="475.93" font-size="6.3" fill="#1c1c1c" textLength="15.51" lengthAdjust="spacingAndGlyphs" stroke="#1c1c1c" stroke-width="0.17">11887</text>
<text x="269.61" y="488.38" font-size="6.3" fill="#1c1c1c" textLength="3.19" lengthAdjust="spacingAndGlyphs" stroke="#1c1c1c" stroke-width="0.17">9</text>
<text x="286.72" y="488.38" font-size="6.3" fill="#1c1c1c" textLength="28.68" lengthAdjust="spacingAndGlyphs" stroke="#1c1c1c" stroke-width="0.17">21/04/2010</text>
<text x="320" y="488.38" font-size="6.3" fill="#1c1c1c" textLength="12.1" lengthAdjust="spacingAndGlyphs" stroke="#1c1c1c" stroke-width="0.17">DVD</text>
<text x="351.41" y="488.38" font-size="6.3" fill="#1c1c1c" textLength="3.19" lengthAdjust="spacingAndGlyphs" stroke="#1c1c1c" stroke-width="0.17">6</text>
<text x="359.3" y="488.38" font-size="6.3" fill="#1c1c1c" textLength="80.89" lengthAdjust="spacingAndGlyphs" stroke="#1c1c1c" stroke-width="0.17">Gershwin, Un Américain à Paris</text>
<text x="538.3" y="488.38" font-size="6.3" fill="#1c1c1c" textLength="26.12" lengthAdjust="spacingAndGlyphs" stroke="#1c1c1c" stroke-width="0.17">ACS 8034</text>
<text x="600.45" y="488.38" font-size="6.3" fill="#1c1c1c" textLength="11.15" lengthAdjust="spacingAndGlyphs" stroke="#1c1c1c" stroke-width="0.17">5,99</text>
<text x="632.06" y="488.38" font-size="6.3" fill="#1c1c1c" textLength="14.34" lengthAdjust="spacingAndGlyphs" stroke="#1c1c1c" stroke-width="0.17">35,94</text>
<text x="650.7" y="488.38" font-size="6.3" fill="#1c1c1c" textLength="60.02" lengthAdjust="spacingAndGlyphs" stroke="#1c1c1c" stroke-width="0.17">Boîte à Musique d&#x27;Aline</text>
<text x="765.8" y="488.38" font-size="6.3" fill="#1c1c1c" textLength="34.72" lengthAdjust="spacingAndGlyphs" stroke="#1c1c1c" stroke-width="0.17">Aline Jeannot</text>
<text x="891.79" y="488.38" font-size="6.3" fill="#1c1c1c" textLength="15.51" lengthAdjust="spacingAndGlyphs" stroke="#1c1c1c" stroke-width="0.17">11887</text>
<text x="268.01" y="500.83" font-size="6.3" fill="#1c1c1c" textLength="6.37" lengthAdjust="spacingAndGlyphs" stroke="#1c1c1c" stroke-width="0.17">10</text>
<text x="286.72" y="500.83" font-size="6.3" fill="#1c1c1c" textLength="28.68" lengthAdjust="spacingAndGlyphs" stroke="#1c1c1c" stroke-width="0.17">05/04/2010</text>
<text x="320" y="500.83" font-size="6.3" fill="#1c1c1c" textLength="8.28" lengthAdjust="spacingAndGlyphs" stroke="#1c1c1c" stroke-width="0.17">CD</text>
<text x="351.41" y="500.83" font-size="6.3" fill="#1c1c1c" textLength="3.19" lengthAdjust="spacingAndGlyphs" stroke="#1c1c1c" stroke-width="0.17">6</text>
<text x="359.3" y="500.83" font-size="6.3" fill="#1c1c1c" textLength="96.17" lengthAdjust="spacingAndGlyphs" stroke="#1c1c1c" stroke-width="0.17">Stravinski, Dumbarton Oaks Concerto</text>
<text x="538.3" y="500.83" font-size="6.3" fill="#1c1c1c" textLength="31.21" lengthAdjust="spacingAndGlyphs" stroke="#1c1c1c" stroke-width="0.17">SMCD 5120</text>
<text x="600.45" y="500.83" font-size="6.3" fill="#1c1c1c" textLength="11.15" lengthAdjust="spacingAndGlyphs" stroke="#1c1c1c" stroke-width="0.17">8,99</text>
<text x="632.06" y="500.83" font-size="6.3" fill="#1c1c1c" textLength="14.34" lengthAdjust="spacingAndGlyphs" stroke="#1c1c1c" stroke-width="0.17">53,94</text>
<text x="650.7" y="500.83" font-size="6.3" fill="#1c1c1c" textLength="42.36" lengthAdjust="spacingAndGlyphs" stroke="#1c1c1c" stroke-width="0.17">Grande Musique</text>
<text x="765.8" y="500.83" font-size="6.3" fill="#1c1c1c" textLength="34.71" lengthAdjust="spacingAndGlyphs" stroke="#1c1c1c" stroke-width="0.17">Martin Deville</text>
<text x="891.37" y="500.83" font-size="6.3" fill="#1c1c1c" textLength="15.93" lengthAdjust="spacingAndGlyphs" stroke="#1c1c1c" stroke-width="0.17">17959</text>
<text x="268.23" y="513.28" font-size="6.3" fill="#1c1c1c" textLength="5.95" lengthAdjust="spacingAndGlyphs" stroke="#1c1c1c" stroke-width="0.17">11</text>
<text x="286.72" y="513.28" font-size="6.3" fill="#1c1c1c" textLength="28.68" lengthAdjust="spacingAndGlyphs" stroke="#1c1c1c" stroke-width="0.17">05/04/2010</text>
<text x="351.41" y="513.28" font-size="6.3" fill="#1c1c1c" textLength="3.19" lengthAdjust="spacingAndGlyphs" stroke="#1c1c1c" stroke-width="0.17">1</text>
<text x="359.3" y="513.28" font-size="6.3" fill="#1c1c1c" textLength="78.36" lengthAdjust="spacingAndGlyphs" stroke="#1c1c1c" stroke-width="0.17">Schubert, Sonate en mi, D.566</text>
<text x="538.3" y="513.28" font-size="6.3" fill="#1c1c1c" textLength="19.11" lengthAdjust="spacingAndGlyphs" stroke="#1c1c1c" stroke-width="0.17">AS-325</text>
<text x="600.45" y="513.28" font-size="6.3" fill="#1c1c1c" textLength="11.15" lengthAdjust="spacingAndGlyphs" stroke="#1c1c1c" stroke-width="0.17">9,00</text>
<text x="635.25" y="513.28" font-size="6.3" fill="#1c1c1c" textLength="11.15" lengthAdjust="spacingAndGlyphs" stroke="#1c1c1c" stroke-width="0.17">9,00</text>
<text x="650.7" y="513.28" font-size="6.3" fill="#1c1c1c" textLength="42.36" lengthAdjust="spacingAndGlyphs" stroke="#1c1c1c" stroke-width="0.17">Grande Musique</text>
<text x="765.8" y="513.28" font-size="6.3" fill="#1c1c1c" textLength="34.71" lengthAdjust="spacingAndGlyphs" stroke="#1c1c1c" stroke-width="0.17">Martin Deville</text>
<text x="891.37" y="513.28" font-size="6.3" fill="#1c1c1c" textLength="15.93" lengthAdjust="spacingAndGlyphs" stroke="#1c1c1c" stroke-width="0.17">17959</text>
</svg>
<rect x="263.4" y="363.7" width="646.1" height="2" fill="#dcdcdc"/>
<rect x="263.4" y="365.4" width="646.1" height="16" fill="#c9c9c9"/>
<rect x="623" y="364.2" width="18" height="1.6" fill="#f0426f"/>
<svg x="281.2" y="369.9" width="6.6" height="6.6" viewBox="0 0 6.6 6.6" overflow="visible"><g fill="none" stroke="#808080" stroke-width="0.55"><circle cx="3.3" cy="3.3" r="2.9"/><path d="M3.3 1.5 V3.4 H4.8"/></g></svg>
<text x="290.6" y="376.3" font-size="8" fill="#222" textLength="23.8" lengthAdjust="spacingAndGlyphs" font-weight="700">Date…</text>
<text x="319" y="376.19" font-size="7.4" fill="#6c6c6c" textLength="7.6" lengthAdjust="spacingAndGlyphs">Ab</text>
<text x="330" y="376.3" font-size="8" fill="#222" textLength="7" lengthAdjust="spacingAndGlyphs" font-weight="700">S.</text>
<text x="343.2" y="376.81" font-size="8.6" fill="#808080" textLength="4.6" lengthAdjust="spacingAndGlyphs" font-style="italic">#</text>
<text x="352" y="376.3" font-size="8" fill="#222" textLength="3.6" lengthAdjust="spacingAndGlyphs" font-weight="700">..</text>
<text x="358.6" y="376.19" font-size="7.4" fill="#6c6c6c" textLength="7.6" lengthAdjust="spacingAndGlyphs">Ab</text>
<text x="369" y="376.3" font-size="8" fill="#222" textLength="23.6" lengthAdjust="spacingAndGlyphs" font-weight="700">Article</text>
<text x="538" y="376.19" font-size="7.4" fill="#6c6c6c" textLength="7.6" lengthAdjust="spacingAndGlyphs">Ab</text>
<text x="547.6" y="376.3" font-size="8" fill="#222" textLength="31.1" lengthAdjust="spacingAndGlyphs" font-weight="700">Label/N°</text>
<text x="591.2" y="376.81" font-size="8.6" fill="#808080" textLength="4.6" lengthAdjust="spacingAndGlyphs" font-style="italic">#</text>
<text x="599.6" y="376.3" font-size="8" fill="#222" textLength="12.4" lengthAdjust="spacingAndGlyphs" font-weight="700">P…</text>
<text x="617.4" y="376.81" font-size="8.6" fill="#808080" textLength="4.6" lengthAdjust="spacingAndGlyphs" font-style="italic">#</text>
<text x="625.4" y="376.3" font-size="8" fill="#222" textLength="19.3" lengthAdjust="spacingAndGlyphs" font-weight="700">Mo…</text>
<text x="650.4" y="376.19" font-size="7.4" fill="#6c6c6c" textLength="7.6" lengthAdjust="spacingAndGlyphs">Ab</text>
<text x="661" y="376.3" font-size="8" fill="#222" textLength="21" lengthAdjust="spacingAndGlyphs" font-weight="700">Client</text>
<text x="765.5" y="376.19" font-size="7.4" fill="#6c6c6c" textLength="7.6" lengthAdjust="spacingAndGlyphs">Ab</text>
<text x="776.2" y="376.3" font-size="8" fill="#222" textLength="28.1" lengthAdjust="spacingAndGlyphs" font-weight="700">Contact</text>
<text x="873.4" y="376.81" font-size="8.6" fill="#808080" textLength="4.6" lengthAdjust="spacingAndGlyphs" font-style="italic">#</text>
<text x="883" y="376.3" font-size="8" fill="#222" textLength="23.9" lengthAdjust="spacingAndGlyphs" font-weight="700">Num…</text>
<rect x="992.5" y="366.5" width="5.8" height="145" fill="#e8e8e8"/>
<rect x="992.77" y="366.77" width="5.25" height="8.65" stroke="#c4c4c4" stroke-width="0.55" fill="#fdfdfd"/>
<rect x="992.77" y="502.57" width="5.25" height="8.65" stroke="#c4c4c4" stroke-width="0.55" fill="#fdfdfd"/>
<svg x="993.6" y="370.1" width="3.6" height="2.6" viewBox="0 0 3.6 2.6" overflow="visible"><path d="M1.8 0.2 L3.4 2.4 H0.2 Z" fill="#333"/></svg>
<svg x="993.6" y="505.7" width="3.6" height="2.6" viewBox="0 0 3.6 2.6" overflow="visible"><path d="M1.8 2.4 L3.4 0.2 H0.2 Z" fill="#333"/></svg>
<rect x="992.77" y="375.88" width="5.25" height="8.05" stroke="#c4c4c4" stroke-width="0.55" fill="#fff"/>
<rect x="0" y="513" width="1000" height="16" fill="#173757"/>
<rect x="260.15" y="341.95" width="739.6" height="171.1" stroke="#fa0000" stroke-width="2.3" fill="none"/>
<rect x="263.1" y="343.3" width="0.6" height="168.6" fill="#f6b9c6"/>
<svg x="459.4" y="516.8" width="12" height="8" viewBox="0 0 12 8" overflow="visible"><path d="M0.5 0.6 V7.4 M11.8 4 H3.2 M6.4 0.7 L3.1 4 L6.4 7.3" stroke="#a6b5c6" stroke-width="0.8" fill="none"/></svg>
<svg x="478" y="516.8" width="9" height="8" viewBox="0 0 9 8" overflow="visible"><path d="M8.8 4 H0.4 M3.6 0.7 L0.3 4 L3.6 7.3" stroke="#a6b5c6" stroke-width="0.8" fill="none"/></svg>
<rect x="493.8" y="514.8" width="11.2" height="13" fill="#fff"/>
<svg x="514" y="516.8" width="9" height="8" viewBox="0 0 9 8" overflow="visible"><path d="M0.2 4 H8.6 M5.4 0.7 L8.7 4 L5.4 7.3" stroke="#a6b5c6" stroke-width="0.8" fill="none"/></svg>
<svg x="532" y="516.8" width="12" height="8" viewBox="0 0 12 8" overflow="visible"><path d="M11.6 0.6 V7.4 M0.2 4 H8.8 M5.6 0.7 L8.9 4 L5.6 7.3" stroke="#a6b5c6" stroke-width="0.8" fill="none"/></svg>
<rect x="958" y="513" width="20.5" height="16" fill="#33689a"/>
<svg x="964.5" y="516" width="8" height="9" viewBox="0 0 8 9" overflow="visible"><g stroke="#dfe8f0" stroke-width="0.7" fill="none"><path d="M0.5 0.5 H7.5 M0.5 8.5 H7.5 M4 2 V7 M2.6 3.4 L4 2 L5.4 3.4 M2.6 5.6 L4 7 L5.4 5.6"/></g></svg>
</svg>
</body></html>
